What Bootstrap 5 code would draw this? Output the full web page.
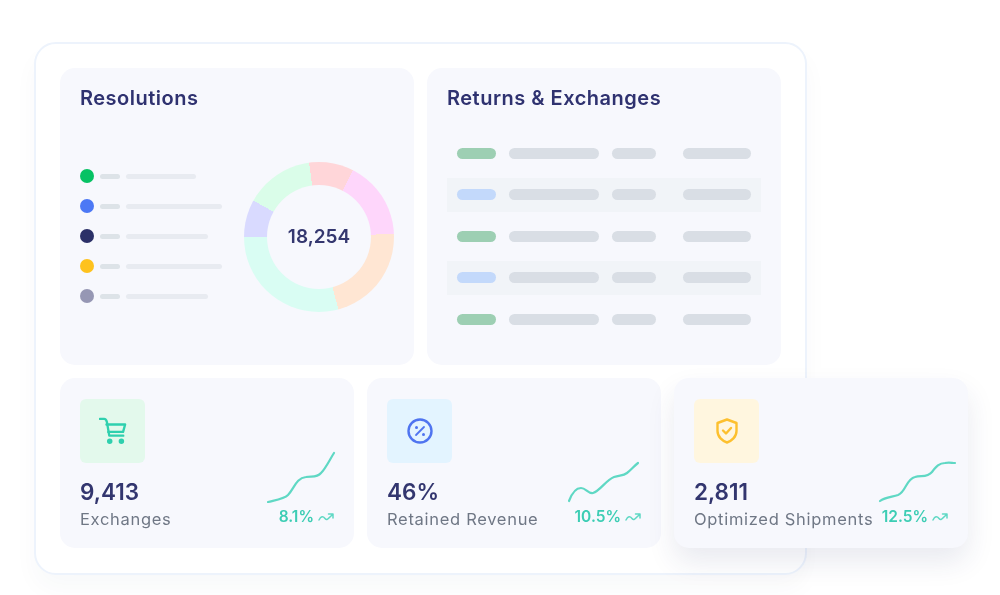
<!doctype html>
<html lang="en"><head><meta charset="utf-8"><title>Dashboard</title>
<link href="https://cdn.jsdelivr.net/npm/bootstrap@5.3.0/dist/css/bootstrap.min.css" rel="stylesheet">
<style>
html,body{background:#fff;overflow:hidden}
body{font-family:Inter,"Liberation Sans",sans-serif;height:595px}
.stage{padding:42px 0 0 34px;filter:blur(.7px)}
.frame{width:773px;height:533px;padding:24px 24px;background:#fff;border:2px solid #edf3fc;border-radius:22px;box-shadow:0 14px 24px rgba(40,50,110,.03)}
.panel{background:#f7f8fd;border-radius:15px}
.top-panel{width:354px;height:297px;padding:18px 20px}
.panel-title{font-size:20px;line-height:24px;font-weight:600;color:#2f3270;margin:0;letter-spacing:.5px}
.legend-list{margin-top:59px;gap:16px;width:142px}
.legend-row{height:14px}
.dot{width:14px;height:14px;border-radius:50%;flex:none}
.dash{width:20px;height:5px;border-radius:3px;background:#dde3e8;margin:0 6px 0 6px;flex:none}
.bar{height:5px;border-radius:3px;background:#e8ebf1}
.donut{width:150px;height:150px;border-radius:50%;flex:none;margin:52px 0 0 22px;background:conic-gradient(from -7.6deg,#ffd6d9 0 34.6deg,#fed6fb 34.6deg 95.1deg,#ffe6d3 95.1deg 172.6deg,#d9fdf3 172.6deg 277.6deg,#d9daff 277.6deg 306.6deg,#dafde9 306.6deg 360deg)}
.donut-hole{width:104px;height:104px;border-radius:50%;background:#f7f8fd;font-size:19px;font-weight:600;color:#34376f}
.tbl{margin-top:26.500px;gap:8px}
.tbl-row{height:33.500px;padding:0 10px;width:314px}
.tbl-row.striped{background:#f1f4f8}
.pill{height:11px;border-radius:6px;background:#d9dee5;flex:none}
.pill-a{width:39px;margin-right:13px}
.pill-b{width:90px;margin-right:13px}
.pill-c{width:44px;margin-right:27px}
.pill-d{width:68px}
.pill-g{background:#9dcfb3}
.pill-s{background:#c3d9fb}
.stat-row{margin-top:13px;gap:13px;width:908px}
.stat{width:294px;height:170px;padding:21px 20px 0;flex:none}
.stat-lift{box-shadow:0 14px 28px rgba(40,50,110,.1);position:relative}
.icon-box{width:65px;height:64px;border-radius:6px}
.ib-green{background:#e3f9ec}
.ib-blue{background:#e3f4ff}
.ib-yellow{background:#fff6df}
.stat-value{font-size:22.500px;line-height:28px;font-weight:600;color:#33366f;margin-top:15px}
.stat-label{font-size:16.500px;line-height:22px;letter-spacing:.7px;color:#6f7785;margin-top:2px;white-space:nowrap}
.spark{display:block;overflow:visible}
.trend{font-size:15.500px;line-height:18px;font-weight:600;color:#3ccdb4;gap:4px;margin-top:3px;white-space:nowrap}
.right-col{margin-top:51px}
</style></head><body>
<div class="stage">
<div class="frame">
  <div class="d-flex" style="gap:13px">
    <section class="panel top-panel">
      <h2 class="panel-title">Resolutions</h2>
      <div class="d-flex">
        <div class="d-flex flex-column legend-list">
          <div class="d-flex align-items-center legend-row"><span class="dot" style="background:#07c264"></span><span class="dash"></span><span class="bar" style="width:70px"></span></div>
          <div class="d-flex align-items-center legend-row"><span class="dot" style="background:#4c78f5"></span><span class="dash"></span><span class="bar" style="width:96px"></span></div>
          <div class="d-flex align-items-center legend-row"><span class="dot" style="background:#2b3068"></span><span class="dash"></span><span class="bar" style="width:82px"></span></div>
          <div class="d-flex align-items-center legend-row"><span class="dot" style="background:#fec21e"></span><span class="dash"></span><span class="bar" style="width:96px"></span></div>
          <div class="d-flex align-items-center legend-row"><span class="dot" style="background:#9697b4"></span><span class="dash"></span><span class="bar" style="width:82px"></span></div>
        </div>
        <div class="donut d-flex align-items-center justify-content-center"><div class="donut-hole d-flex align-items-center justify-content-center">18,254</div></div>
      </div>
    </section>
    <section class="panel top-panel">
      <h2 class="panel-title">Returns &amp; Exchanges</h2>
      <div class="d-flex flex-column tbl">
        <div class="d-flex align-items-center tbl-row"><span class="pill pill-a pill-g"></span><span class="pill pill-b"></span><span class="pill pill-c"></span><span class="pill pill-d"></span></div>
        <div class="d-flex align-items-center tbl-row striped"><span class="pill pill-a pill-s"></span><span class="pill pill-b"></span><span class="pill pill-c"></span><span class="pill pill-d"></span></div>
        <div class="d-flex align-items-center tbl-row"><span class="pill pill-a pill-g"></span><span class="pill pill-b"></span><span class="pill pill-c"></span><span class="pill pill-d"></span></div>
        <div class="d-flex align-items-center tbl-row striped"><span class="pill pill-a pill-s"></span><span class="pill pill-b"></span><span class="pill pill-c"></span><span class="pill pill-d"></span></div>
        <div class="d-flex align-items-center tbl-row"><span class="pill pill-a pill-g"></span><span class="pill pill-b"></span><span class="pill pill-c"></span><span class="pill pill-d"></span></div>
      </div>
    </section>
  </div>
  <div class="d-flex stat-row">
    <article class="panel stat d-flex justify-content-between">
      <div>
        <div class="icon-box ib-green d-flex align-items-center justify-content-center">
          <svg width="28" height="28" viewBox="0 0 30 30" fill="none" stroke="#2fd0ae" stroke-width="2.500" stroke-linecap="round" stroke-linejoin="round"><path d="M1 2h4.500c2 0 2.500 1.500 3 3.500l2.500 14.500h15"/><path d="M8 8h20l-2.200 8H10"/><circle cx="11.500" cy="26" r="1.700" fill="#2fd0ae"/><circle cx="24" cy="26" r="1.700" fill="#2fd0ae"/></svg>
        </div>
        <div class="stat-value">9,413</div>
        <div class="stat-label">Exchanges</div>
      </div>
      <div class="right-col d-flex flex-column align-items-end">
        <svg class="spark" width="70" height="55" viewBox="264 450 70 55" fill="none" stroke="#5fd8c4" stroke-width="2.200" stroke-linecap="round"><path d="M268 502C276 500 284 499 288 495C294 489 296 478 306 477C312 476 317 478 321 473C326 468 330 459 334 453"/></svg>
        <div class="trend d-flex align-items-center"><span>8.1%</span><svg width="16" height="9" viewBox="0 0 16 9" fill="none" stroke="#5fd8c4" stroke-width="1.500" stroke-linecap="round" stroke-linejoin="round"><path d="M1 7C3 3 5 3 7 5.500S10 6 14.500 1.500M10.500 1H15V5"/></svg></div>
      </div>
    </article>
    <article class="panel stat d-flex justify-content-between">
      <div>
        <div class="icon-box ib-blue d-flex align-items-center justify-content-center">
          <svg width="26" height="26" viewBox="0 0 26 26" fill="none" stroke="#4f74f0" stroke-width="2.400" stroke-linecap="round"><circle cx="13" cy="13" r="11.500"/><path d="M17 9l-8 8" stroke-width="1.800"/><circle cx="9.500" cy="9.500" r="1.500" fill="#4f74f0" stroke="none"/><circle cx="16.500" cy="16.500" r="1.500" fill="#4f74f0" stroke="none"/></svg>
        </div>
        <div class="stat-value">46%</div>
        <div class="stat-label">Retained Revenue</div>
      </div>
      <div class="right-col d-flex flex-column align-items-end">
        <svg class="spark" width="70" height="55" viewBox="571 450 70 55" fill="none" stroke="#5fd8c4" stroke-width="2.200" stroke-linecap="round"><path d="M569 501C572 493 576 488 581 488C586 488 588 494 593 493C600 491 606 480 614 477C620 475 623 476 627 473C631 470 634 466 638 463"/></svg>
        <div class="trend d-flex align-items-center"><span>10.5%</span><svg width="16" height="9" viewBox="0 0 16 9" fill="none" stroke="#5fd8c4" stroke-width="1.500" stroke-linecap="round" stroke-linejoin="round"><path d="M1 7C3 3 5 3 7 5.500S10 6 14.500 1.500M10.500 1H15V5"/></svg></div>
      </div>
    </article>
    <article class="panel stat stat-lift d-flex justify-content-between">
      <div>
        <div class="icon-box ib-yellow d-flex align-items-center justify-content-center">
          <svg width="22" height="26" viewBox="0 0 22 26" fill="none" stroke="#fdc02e" stroke-width="2.400" stroke-linecap="round" stroke-linejoin="round"><path d="M11 1.500L20.500 5V13C20.500 19 15.500 23 11 24.500C6.500 23 1.500 19 1.500 13V5Z"/><path d="M7 12.500l3 3 5-5.500"/></svg>
        </div>
        <div class="stat-value">2,811</div>
        <div class="stat-label">Optimized Shipments</div>
      </div>
      <div class="right-col d-flex flex-column align-items-end">
        <svg class="spark" width="70" height="55" viewBox="878 450 70 55" fill="none" stroke="#5fd8c4" stroke-width="2.200" stroke-linecap="round"><path d="M880 501C885 497 892 497 898 495C906 492 906 479 915 477C921 475 927 478 932 472C936 467 939 463 945 463C949 462 952 463 955 463"/></svg>
        <div class="trend d-flex align-items-center"><span>12.5%</span><svg width="16" height="9" viewBox="0 0 16 9" fill="none" stroke="#5fd8c4" stroke-width="1.500" stroke-linecap="round" stroke-linejoin="round"><path d="M1 7C3 3 5 3 7 5.500S10 6 14.500 1.500M10.500 1H15V5"/></svg></div>
      </div>
    </article>
  </div>
</div>
</div>
<script src="https://cdn.jsdelivr.net/npm/bootstrap@5.3.0/dist/js/bootstrap.bundle.min.js"></script>
</body></html>
